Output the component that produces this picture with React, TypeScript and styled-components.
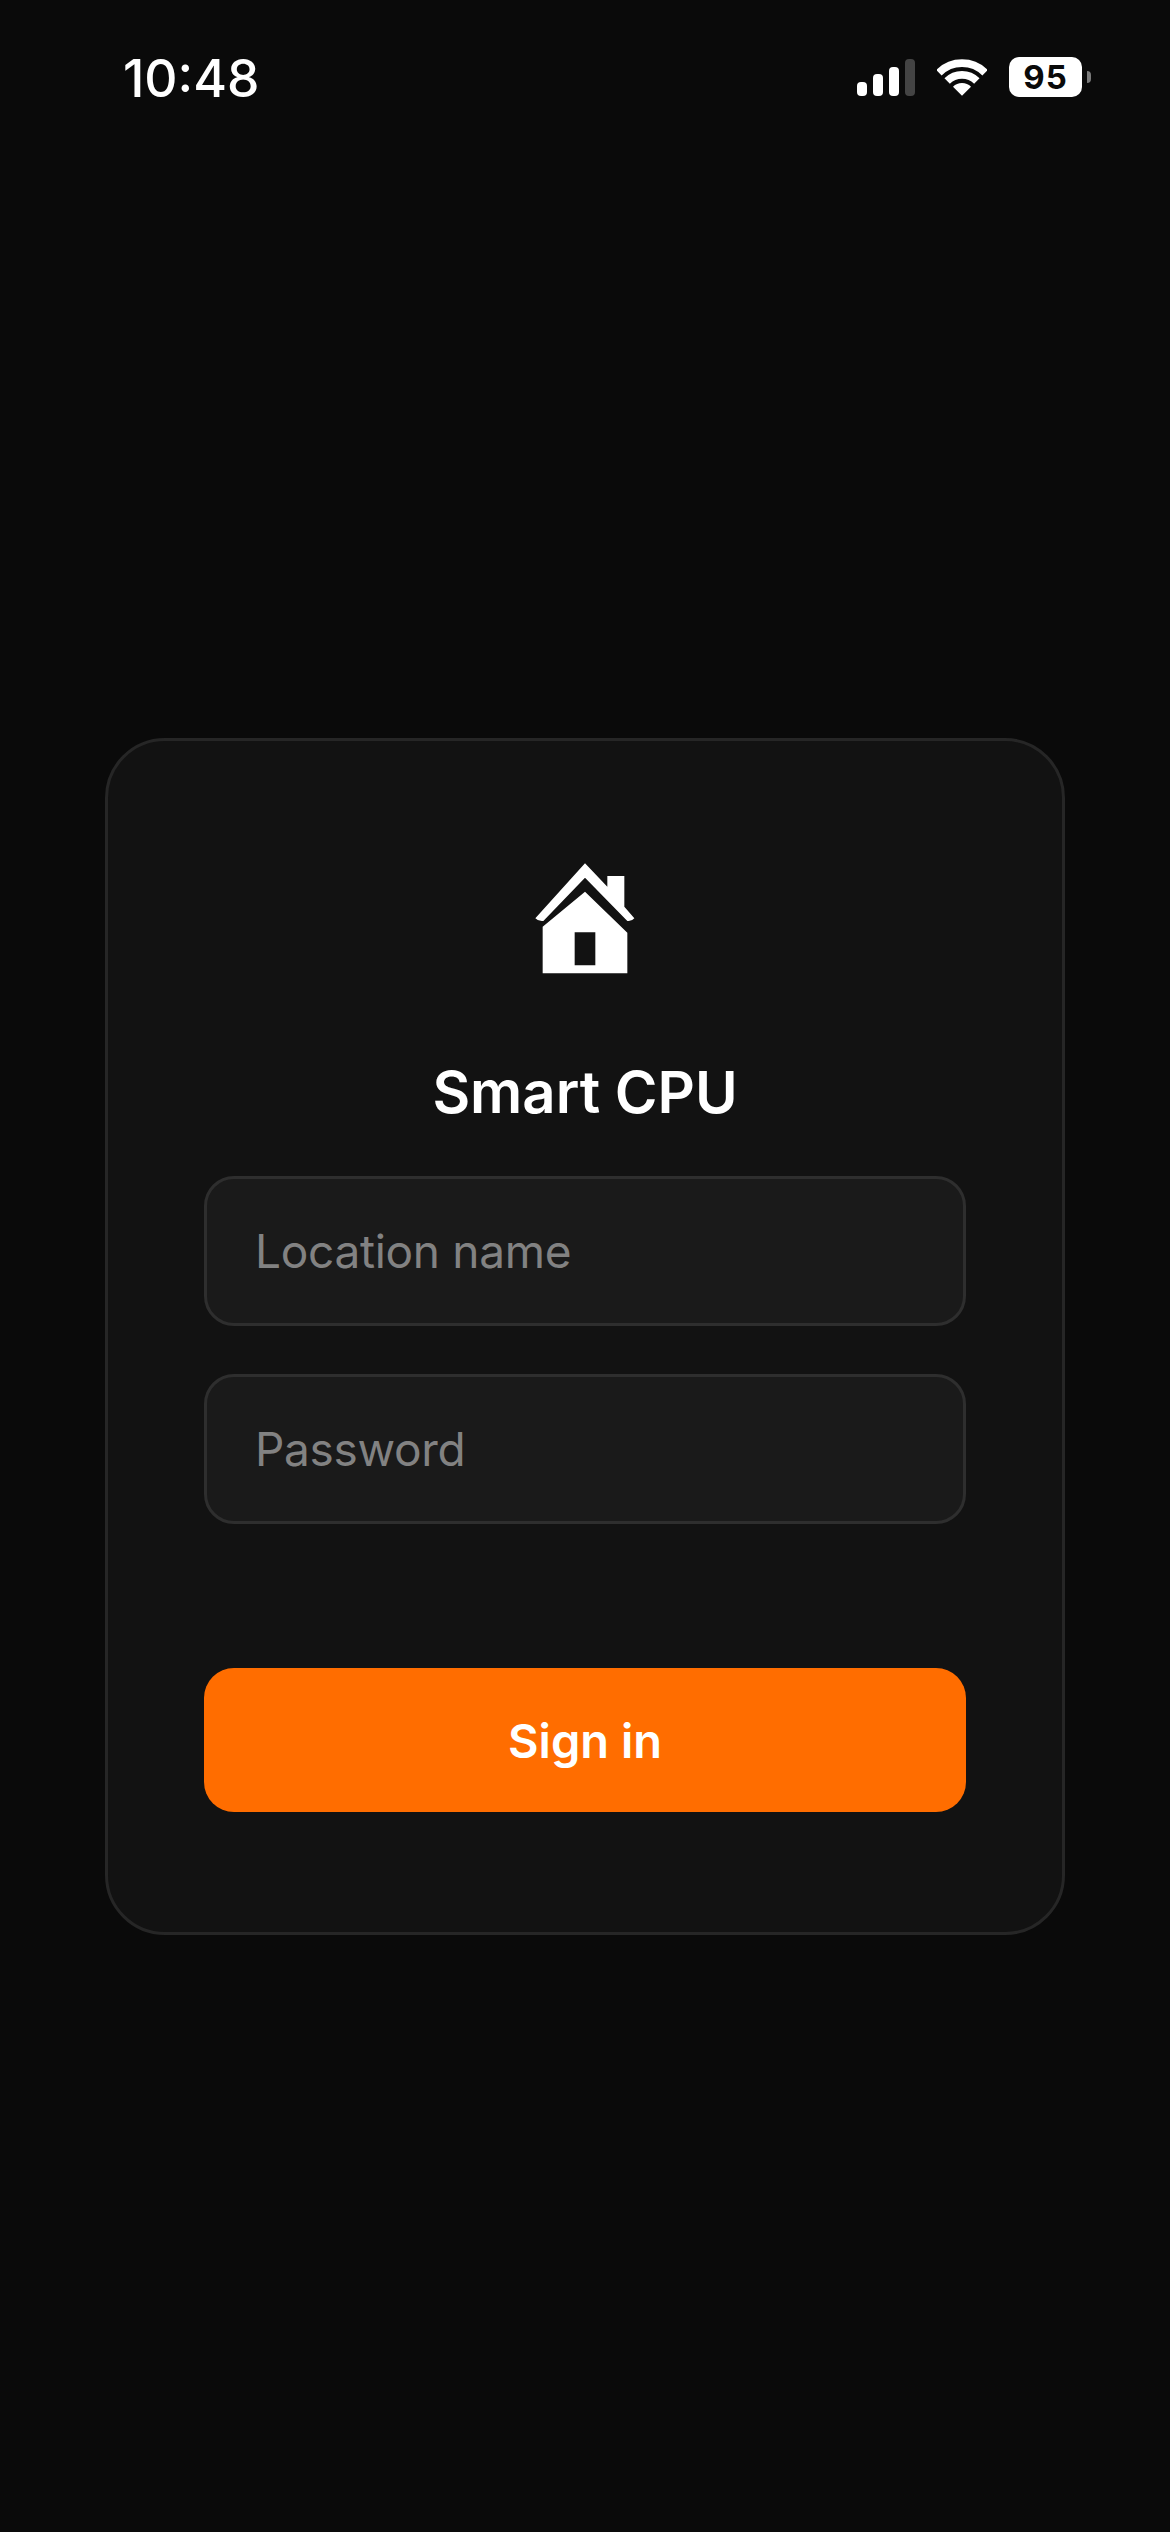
import React from 'react';
import styled, { createGlobalStyle } from 'styled-components';

const GlobalStyle = createGlobalStyle`
  * {
    box-sizing: border-box;
  }
  html, body {
    margin: 0;
    padding: 0;
    background: #0a0a0a;
  }
`;

const Screen = styled.div`
  width: 1170px;
  height: 2532px;
  display: flex;
  flex-direction: column;
  background: #0a0a0a;
  color: #fff;
  font-family: Inter, "Liberation Sans", sans-serif;
`;

const StatusBar = styled.div`
  height: 140px;
  flex: none;
  display: flex;
  align-items: flex-start;
  justify-content: space-between;
  padding: 49px 88px 0 123px;
`;

const Clock = styled.div`
  font-size: 51.5px;
  line-height: 58px;
  font-weight: 500;
`;

const StatusIcons = styled.div`
  display: flex;
  align-items: center;
  gap: 22px;
  padding-top: 8px;
`;

const Battery = styled.div`
  position: relative;
  width: 73px;
  height: 40px;
  border-radius: 10px;
  background: #fff;
  color: #0a0a0a;
  display: flex;
  align-items: center;
  justify-content: center;
  font-size: 33px;
  font-weight: 700;
  letter-spacing: 1px;
  line-height: 40px;

  &::after {
    content: '';
    position: absolute;
    right: -9px;
    top: 14px;
    width: 4px;
    height: 12px;
    border-radius: 0 6px 6px 0;
    background: #7a7a7a;
  }
`;

const Main = styled.main`
  flex: 1;
  display: flex;
  align-items: center;
  justify-content: center;
`;

const Card = styled.form`
  width: 960px;
  display: flex;
  flex-direction: column;
  align-items: stretch;
  padding: 99px 96px 120px;
  background: #121212;
  border: 3px solid #262626;
  border-radius: 60px;
`;

const Logo = styled.svg`
  width: 150px;
  height: 150px;
  align-self: center;
  display: block;
`;

const Title = styled.h1`
  margin: 67px 0 49px;
  font-size: 58px;
  line-height: 70px;
  font-weight: 600;
  text-align: center;
`;

const Field = styled.input`
  width: 100%;
  height: 150px;
  padding: 0 48px;
  margin-bottom: 48px;
  background: #1a1a1a;
  border: 3px solid #2e2e2e;
  border-radius: 30px;
  color: #fff;
  font-family: inherit;
  font-size: 46px;
  letter-spacing: -0.3px;
  outline: none;

  &::placeholder {
    color: #828282;
    opacity: 1;
  }
`;

const SignIn = styled.button`
  width: 100%;
  height: 144px;
  margin-top: 96px;
  padding-top: 2px;
  background: #ff6d00;
  border: none;
  border-radius: 30px;
  color: #fff;
  font-family: inherit;
  font-size: 47px;
  font-weight: 600;
`;

const SignalIcon = () => (
  <svg width="58" height="37" viewBox="0 0 58 37">
    <rect x="0" y="23" width="10" height="14" rx="4" fill="#fff" />
    <rect x="16" y="15" width="10" height="22" rx="4" fill="#fff" />
    <rect x="32" y="8" width="10" height="29" rx="4" fill="#fff" />
    <rect x="48" y="0" width="10" height="37" rx="4" fill="#444" />
  </svg>
);

const WifiIcon = () => (
  <svg width="50" height="37" viewBox="0 0 150 110">
    <path d="M5.7 40.7A98 98 0 0 1 144.3 40.7" fill="none" stroke="#fff" strokeWidth="23" />
    <path d="M30.5 65.5A63 63 0 0 1 119.5 65.5" fill="none" stroke="#fff" strokeWidth="23" />
    <path d="M75 110L48 83A38 38 0 0 1 102 83Z" fill="#fff" />
  </svg>
);

const HouseIcon = () => (
  <Logo viewBox="0 0 450 450">
    <path
      d="M225 70L292 140V108H343V200L373 235Q365 245 352 243L225 113L100 243Q85 245 76 235Z"
      fill="#fff"
    />
    <path
      fillRule="evenodd"
      d="M225 155L352 278V400H98V260ZM194 277V376H256V277Z"
      fill="#fff"
    />
  </Logo>
);

const App = () => {
  return (
    <Screen>
      <GlobalStyle />
      <StatusBar>
        <Clock>10:48</Clock>
        <StatusIcons>
          <SignalIcon />
          <WifiIcon />
          <Battery>95</Battery>
        </StatusIcons>
      </StatusBar>
      <Main>
        <Card onSubmit={(e) => e.preventDefault()}>
          <HouseIcon />
          <Title>Smart CPU</Title>
          <Field placeholder="Location name" />
          <Field type="password" placeholder="Password" />
          <SignIn type="submit">Sign in</SignIn>
        </Card>
      </Main>
    </Screen>
  );
};

export default App;
